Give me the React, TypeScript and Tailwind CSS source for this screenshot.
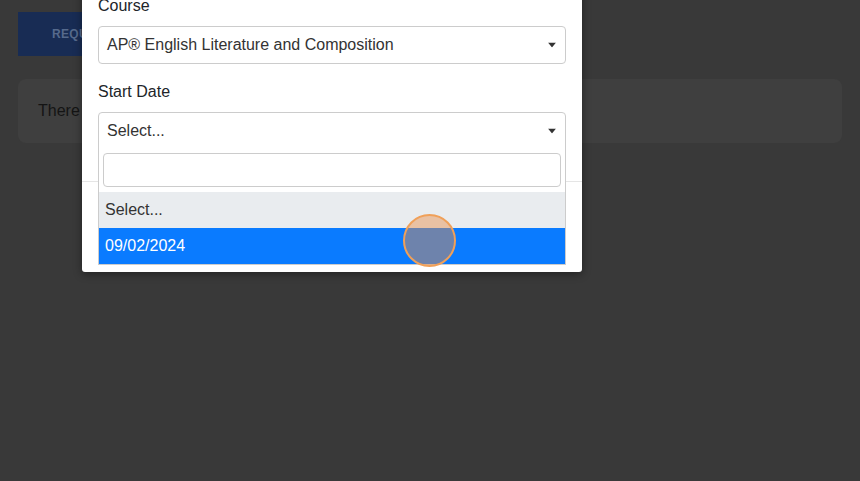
import React from "react";

function Caret() {
  return (
    <svg width="8" height="5" viewBox="0 0 8 5" className="absolute right-[9px] top-1/2 -translate-y-1/2">
      <path d="M0 0 L8 0 L4 5 Z" fill="#333" />
    </svg>
  );
}

export default function App() {
  return (
    <div
      className="relative w-[860px] h-[481px] overflow-hidden bg-[#393939]"
      style={{ fontFamily: '"Liberation Sans", Arial, sans-serif' }}
    >
      {/* page underneath (dimmed) */}
      <div className="flex flex-col gap-[23px] px-[18px] pt-[12px]">
        <div className="w-[180px] h-[44px] bg-[#182c54] flex items-center pl-[34px] text-[12px] font-bold text-[#566a8c] tracking-wide">
          REQUEST COURSE
        </div>
        <div className="w-[824px] h-[64px] rounded-[8px] bg-[#3f3f3f] flex items-center pl-[20px] text-[16px] text-[#141414]">
          There are no requests.
        </div>
      </div>

      {/* modal */}
      <div className="absolute left-[82px] top-[-30px] w-[500px] h-[302px] bg-white rounded-b-[3px] shadow-[0_2px_8px_rgba(0,0,0,0.4)] flex flex-col">
        <div className="px-[16px] pt-[24px] h-[212px] border-b border-[#e5e5e5] text-[16px] text-[#212529]">
          <div className="leading-[24px] mb-[8px]">Course</div>
          <div className="relative h-[38px] border border-[#ccc] rounded-[4px] flex items-center pl-[8px] text-[#333]">
            AP® English Literature and Composition
            <Caret />
          </div>
          <div className="leading-[24px] mt-[16px] mb-[8px]">Start Date</div>
          <div className="relative">
            <div className="relative h-[38px] border border-[#ccc] rounded-t-[4px] flex items-center pl-[8px] text-[#333]">
              Select...
              <Caret />
            </div>
            <div className="absolute left-0 right-0 top-[37px] bg-white border border-[#ccc] border-t-0 z-10">
              <div className="px-[4px] pt-[4px] pb-[5px]">
                <div className="h-[34px] border border-[#ccc] rounded-[4px]" />
              </div>
              <div className="h-[36px] bg-[#e9ecef] flex items-center pl-[6px] text-[#333]">Select...</div>
              <div className="h-[36px] bg-[#0a7bff] flex items-center pl-[6px] text-white">09/02/2024</div>
            </div>
          </div>
        </div>
      </div>

      {/* click indicator */}
      <div className="absolute z-20 left-[403px] top-[214px] w-[53px] h-[53px] rounded-full border-2 border-[#f0a059] bg-[rgba(232,142,70,0.45)]" />
    </div>
  );
}
